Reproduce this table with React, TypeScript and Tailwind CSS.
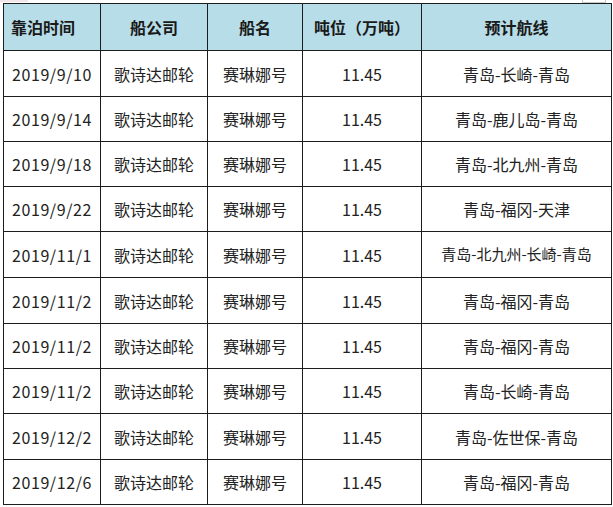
const rows = [
  ["2019/9/10", "青岛-长崎-青岛", 46],
  ["2019/9/14", "青岛-鹿儿岛-青岛", 45],
  ["2019/9/18", "青岛-北九州-青岛", 45],
  ["2019/9/22", "青岛-福冈-天津", 45],
  ["2019/11/1", "青岛-北九州-长崎-青岛", 46],
  ["2019/11/2", "青岛-福冈-青岛", 46],
  ["2019/11/2", "青岛-福冈-青岛", 45],
  ["2019/11/2", "青岛-长崎-青岛", 45],
  ["2019/12/2", "青岛-佐世保-青岛", 46],
  ["2019/12/6", "青岛-福冈-青岛", 45],
] as const;

const headers = ["靠泊时间", "船公司", "船名", "吨位（万吨）", "预计航线"];

const cell =
  "flex items-center justify-center border-r border-b border-[#1c1c1c] whitespace-nowrap";

export default function App() {
  return (
    <div
      className="h-[507px] w-[613px] overflow-hidden bg-white text-[#222]"
      style={{ fontFamily: '"Noto Sans CJK SC", "Noto Sans", sans-serif' }}
    >
      <div className="flex h-[3px] items-start justify-between">
        <div className="ml-0 h-[2px] w-[28px] bg-[#f3e6ea]" />
        <div className="mr-[7px] h-[3px] w-[24px] border border-t-0 border-[#c8c8c8]" />
      </div>
      <div className="ml-[3px] grid w-[609px] grid-cols-[97px_107px_95px_119px_190px] border-l border-t border-[#1c1c1c] text-[16px]">
        {headers.map((h) => (
          <div
            key={h}
            className={`${cell} h-[47px] bg-[#b7dde8] font-bold text-[#1a1a1a] ${
              h === "靠泊时间" ? "justify-start pl-[7px]" : ""
            }`}
          >
            {h}
          </div>
        ))}
        {rows.map(([date, route, height], i) => (
          <Row key={i} date={date} route={route} height={height} />
        ))}
      </div>
    </div>
  );
}

function Row({
  date,
  route,
  height,
}: {
  date: string;
  route: string;
  height: number;
}) {
  const h = height === 46 ? "h-[46px]" : "h-[45px]";
  return (
    <>
      <div className={`${cell} ${h} tracking-[0.6px]`}>{date}</div>
      <div className={`${cell} ${h}`}>歌诗达邮轮</div>
      <div className={`${cell} ${h}`}>赛琳娜号</div>
      <div className={`${cell} ${h}`}>11.45</div>
      <div
        className={`${cell} ${h} ${route.length > 10 ? "text-[15px]" : ""}`}
      >
        {route}
      </div>
    </>
  );
}
